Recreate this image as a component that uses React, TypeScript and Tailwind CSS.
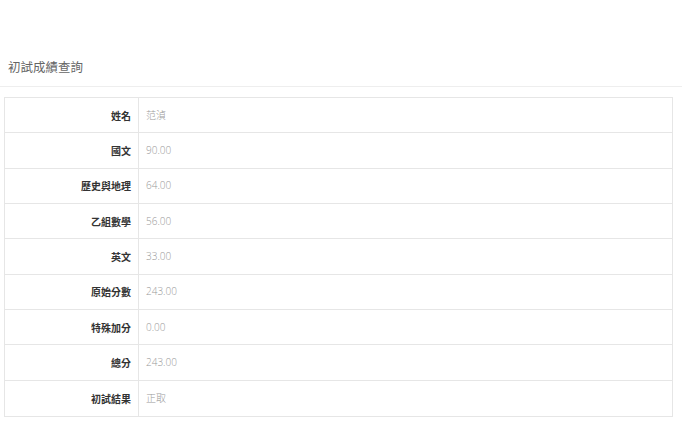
import React from 'react';

const rows: { label: string; value: string }[] = [
  { label: '姓名', value: '范湞' },
  { label: '國文', value: '90.00' },
  { label: '歷史與地理', value: '64.00' },
  { label: '乙組數學', value: '56.00' },
  { label: '英文', value: '33.00' },
  { label: '原始分數', value: '243.00' },
  { label: '特殊加分', value: '0.00' },
  { label: '總分', value: '243.00' },
  { label: '初試結果', value: '正取' },
];

const font = "font-['Open_Sans','Noto_Sans_CJK_TC',sans-serif]";

export default function App() {
  return (
    <div className={`w-[687px] h-[437px] bg-white ${font}`}>
      {/* page heading */}
      <div className="mr-[5px] pt-[58px] pb-[11px] pl-[8px] border-b border-[#eeeeee]">
        <h3 className="text-[12.5px] leading-[17px] text-[#666666] font-['Noto_Sans_CJK_TC',sans-serif]">初試成績查詢</h3>
      </div>

      {/* score table */}
      <div className="ml-[4px] mt-[10px] w-[669px] border border-[#e6e6e6]">
        {rows.map((r, i) => (
          <div
            key={r.label}
            className={`grid grid-cols-[134px_1fr] h-[35.33px] ${i < rows.length - 1 ? 'border-b border-[#e6e6e6]' : ''}`}
          >
            <div className="flex items-center justify-end pr-[7px] border-r border-[#e6e6e6] text-[10px] font-bold text-[#333333] font-['Noto_Sans_CJK_TC',sans-serif]">
              {r.label}
            </div>
            <div className="flex items-center pl-[7px] text-[10px] font-light text-[#999999]">
              {r.value}
            </div>
          </div>
        ))}
      </div>
    </div>
  );
}
